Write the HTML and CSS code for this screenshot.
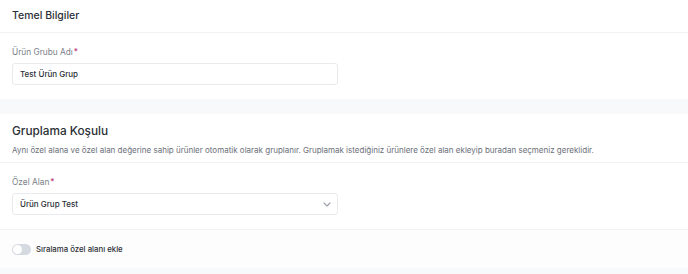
FILE: index.html
```html
<!doctype html>
<html lang="tr">
  <head>
    <meta charset="UTF-8" />
    <meta name="viewport" content="width=device-width, initial-scale=1.0" />
    <title>Ürün Grubu</title>
    <link rel="stylesheet" href="styles.css">
  </head>

  <body>
    <div class="card">
      <div class="card-header">
        <h2 class="card-title">Temel Bilgiler</h2>
      </div>
      <div class="card-body">
        <label class="field-label">Ürün Grubu Adı<span class="required">*</span></label>
        <input type="text" class="field-input" value="Test Ürün Grup" />
      </div>
    </div>

    <div class="spacer"></div>

    <div class="card">
      <div class="card-header card-header-tall">
        <h2 class="card-title card-title-lg">Gruplama Koşulu</h2>
        <p class="card-desc">Aynı özel alana ve özel alan değerine sahip ürünler otomatik olarak gruplanır. Gruplamak istediğiniz ürünlere özel alan ekleyip buradan seçmeniz gereklidir.</p>
      </div>
      <div class="card-body card-body-bordered">
        <label class="field-label">Özel Alan<span class="required">*</span></label>
        <div class="field-select">
          <span>Ürün Grup Test</span>
          <svg class="chevron" width="8" height="5" viewBox="0 0 8 5">
            <path d="M1 1l3 3 3-3" fill="none" stroke="#9aa0aa" stroke-width="1.1" stroke-linecap="round" stroke-linejoin="round" />
          </svg>
        </div>
      </div>
      <div class="toggle-row">
        <span class="toggle"><span class="toggle-knob"></span></span>
        <span class="toggle-label">Sıralama özel alanı ekle</span>
      </div>
    </div>

    <div class="spacer"></div>
  </body>
</html>
```

FILE: styles.css
```css
body {
  margin: 0;
  font-family: Inter, 'Noto Sans', sans-serif;
  background: #ffffff;
  color: #333;
}

.card {
  background: #ffffff;
}

.card-header {
  height: 33px;
  box-sizing: border-box;
  padding: 0 12px 1px;
  display: flex;
  align-items: center;
  border-bottom: 1px solid #f1f2f4;
}

.card-header-tall {
  height: 49px;
  flex-direction: column;
  align-items: flex-start;
  justify-content: flex-start;
  padding-top: 9px;
}

.card-title {
  margin: 0;
  font-size: 10.5px;
  font-weight: 500;
  color: #2b2f36;
}

.card-title-lg {
  font-size: 11.8px;
  line-height: 16px;
}

.card-desc {
  margin: 5px 0 0 0;
  font-size: 8px;
  line-height: 12px;
  color: #6b7079;
}

.card-body {
  padding: 14px 12px 14px;
  display: flex;
  flex-direction: column;
  gap: 6px;
}

.card-body-bordered {
  padding-top: 14px;
  border-bottom: 1px solid #f1f2f4;
}

.field-label {
  font-size: 8.3px;
  line-height: 10px;
  color: #7a7f88;
}

.required {
  color: #b8337a;
  margin-left: 1px;
}

.field-input,
.field-select {
  width: 326px;
  height: 22px;
  box-sizing: border-box;
  border: 1px solid #e8eaed;
  border-radius: 3px;
  padding: 0 7px;
  font-family: inherit;
  font-size: 8px;
  font-weight: 500;
  color: #2b2f36;
  background: #fff;
  outline: none;
}

.field-select {
  display: flex;
  align-items: center;
  justify-content: space-between;
  padding-right: 6px;
}

.chevron {
  margin-top: 1px;
}

.toggle-row {
  height: 38px;
  padding: 0 12px;
  display: flex;
  align-items: center;
  gap: 5px;
  background: #fdfdfd;
}

.toggle {
  width: 19px;
  height: 11px;
  border-radius: 6px;
  background: #d5d9e0;
  display: flex;
  align-items: center;
  padding: 0 1px;
  box-sizing: border-box;
}

.toggle-knob {
  width: 9px;
  height: 9px;
  border-radius: 50%;
  background: #fff;
}

.toggle-label {
  font-size: 7.8px;
  font-weight: 500;
  color: #2b2f36;
}

.spacer {
  height: 15px;
  background: #f8f9fa;
}
```
